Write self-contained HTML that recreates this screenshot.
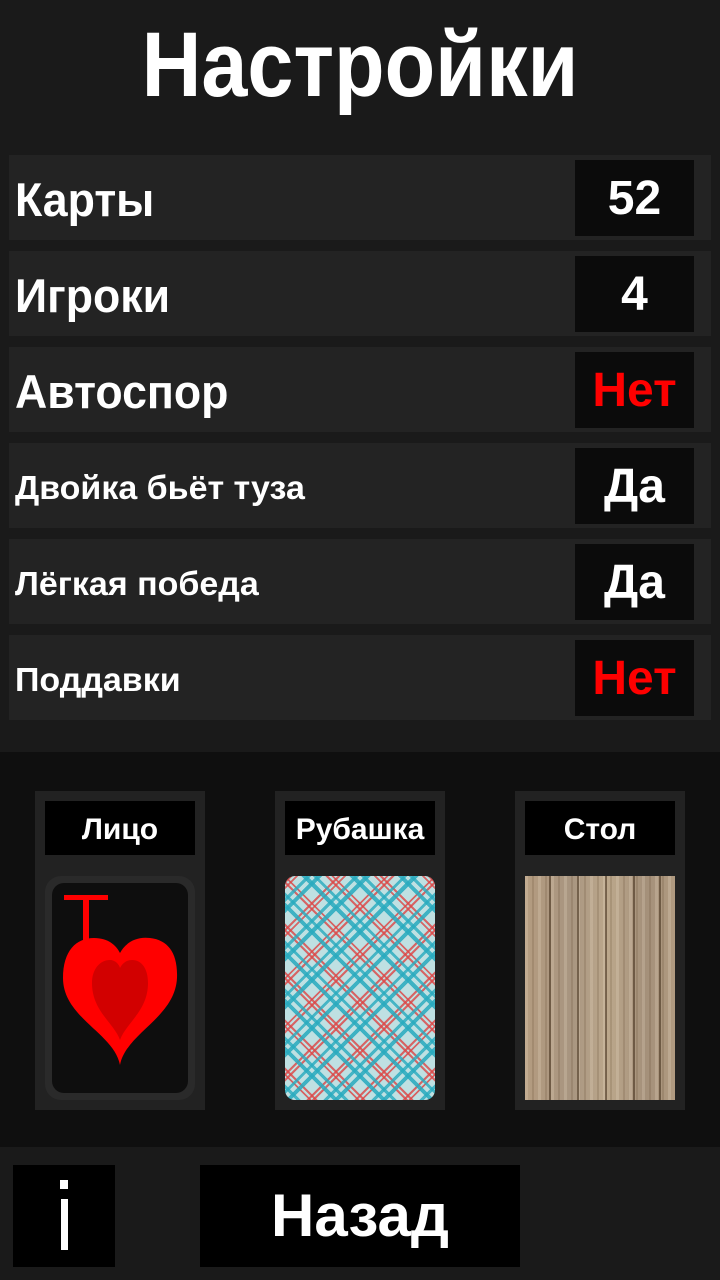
<!DOCTYPE html>
<html><head><meta charset="utf-8"><style>
*{margin:0;padding:0;box-sizing:border-box}
body{width:720px;height:1280px;background:#1a1a1a;font-family:"Liberation Sans","DejaVu Sans",sans-serif;font-weight:bold;color:#fff;position:relative;overflow:hidden}
.title{position:absolute;top:10px;left:0;width:720px;text-align:center;font-size:92px;line-height:110px;transform:scaleX(0.9)}
.row{position:absolute;left:9px;width:702px;height:85px;background:#232323}
.row .lab{position:absolute;left:6px;top:2px;line-height:85px;white-space:nowrap;transform-origin:left center}
.row .val{position:absolute;left:566px;top:5px;width:119px;height:76px;background:#0b0b0b;text-align:center;line-height:78px;font-size:48px}
.big{font-size:47px;transform:scaleX(.95)}.small{font-size:33px;transform:scaleX(1.03)}
.red{color:#ff0000}
.mid{position:absolute;left:0;top:752px;width:720px;height:395px;background:#0f0f0f}
.panel{position:absolute;top:791px;width:170px;height:319px;background:#222}
.plab{position:absolute;left:10px;top:10px;width:150px;height:54px;background:#000;text-align:center;line-height:58px;font-size:30px}
.pimg{position:absolute;left:10px;top:85px;width:150px;height:224px}
.btn{position:absolute;top:1165px;height:102px;background:#000;text-align:center;line-height:102px}
</style></head><body>
<div class="title">Настройки</div>
<div class="row" style="top:155px"><div class="lab big">Карты</div><div class="val">52</div></div>
<div class="row" style="top:251px"><div class="lab big">Игроки</div><div class="val">4</div></div>
<div class="row" style="top:347px"><div class="lab big">Автоспор</div><div class="val red">Нет</div></div>
<div class="row" style="top:443px"><div class="lab small">Двойка бьёт туза</div><div class="val">Да</div></div>
<div class="row" style="top:539px"><div class="lab small">Лёгкая победа</div><div class="val">Да</div></div>
<div class="row" style="top:635px"><div class="lab small">Поддавки</div><div class="val red">Нет</div></div>
<div class="mid"></div>
<div class="panel" style="left:35px"><div class="plab">Лицо</div>
<div class="pimg" style="background:#2a2a2a;border-radius:16px;padding:7px">
<div style="width:100%;height:100%;background:#0e0e0e;border-radius:12px;position:relative">
<svg width="136" height="210" viewBox="0 0 136 210" style="position:absolute;left:0;top:0">
<path d="M12 12h44v5H37v46h-6V17H12z" fill="#f00"/>
<path d="M68 182 C62 150 11 135 11 95 C11 68 24 55 42 55 C56 55 64 62 68 70 C72 62 82 53 98 55 C116 57 126 70 125 95 C123 135 74 150 68 182Z" fill="#f00"/>
<path d="M68 157 C62 140 40 128 40 100 C40 86 48 77 58 77 C63 77 67 81 68 85 C70 81 74 77 80 77 C90 77 96 86 96 100 C96 128 74 140 68 157Z" fill="#d20000"/>
</svg></div></div></div>
<div class="panel" style="left:275px"><div class="plab">Рубашка</div>
<div class="pimg" style="border-radius:10px;background:
repeating-linear-gradient(45deg,rgba(40,170,190,.85) 0 4px,transparent 4px 8px,rgba(40,170,190,.8) 8px 11px,transparent 11px 34px),
repeating-linear-gradient(-45deg,rgba(40,170,190,.85) 0 4px,transparent 4px 8px,rgba(40,170,190,.8) 8px 11px,transparent 11px 34px),
repeating-linear-gradient(45deg,transparent 0 17px,rgba(220,70,70,.8) 17px 19px,transparent 19px 21px,rgba(220,70,70,.8) 21px 23px,transparent 23px 34px),
repeating-linear-gradient(-45deg,transparent 0 17px,rgba(220,70,70,.8) 17px 19px,transparent 19px 21px,rgba(220,70,70,.8) 21px 23px,transparent 23px 34px),
#bfe0e2"></div></div>
<div class="panel" style="left:515px"><div class="plab">Стол</div>
<div class="pimg" style="background:
linear-gradient(90deg,transparent 0 24px,rgba(70,50,30,.6) 24px 26px,transparent 26px 52px,rgba(70,50,30,.6) 52px 54px,transparent 54px 80px,rgba(70,50,30,.6) 80px 82px,transparent 82px 108px,rgba(70,50,30,.6) 108px 110px,transparent 110px 134px,rgba(70,50,30,.6) 134px 136px,transparent 136px),
repeating-linear-gradient(90deg,rgba(255,240,220,.18) 0 3px,transparent 3px 7px,rgba(90,65,40,.18) 7px 9px,transparent 9px 13px),
linear-gradient(90deg,#b49c80,#a89580 30%,#bca88c 55%,#a4907a 80%,#b09a80);"></div></div>
<div class="btn" style="left:13px;width:102px"></div>
<div style="position:absolute;left:60px;top:1180px;width:8px;height:9px;background:#fff"></div>
<div style="position:absolute;left:61px;top:1199px;width:7px;height:51px;background:#fff"></div>
<div class="btn" style="left:200px;width:320px;font-size:60px">Назад</div>
</body></html>
